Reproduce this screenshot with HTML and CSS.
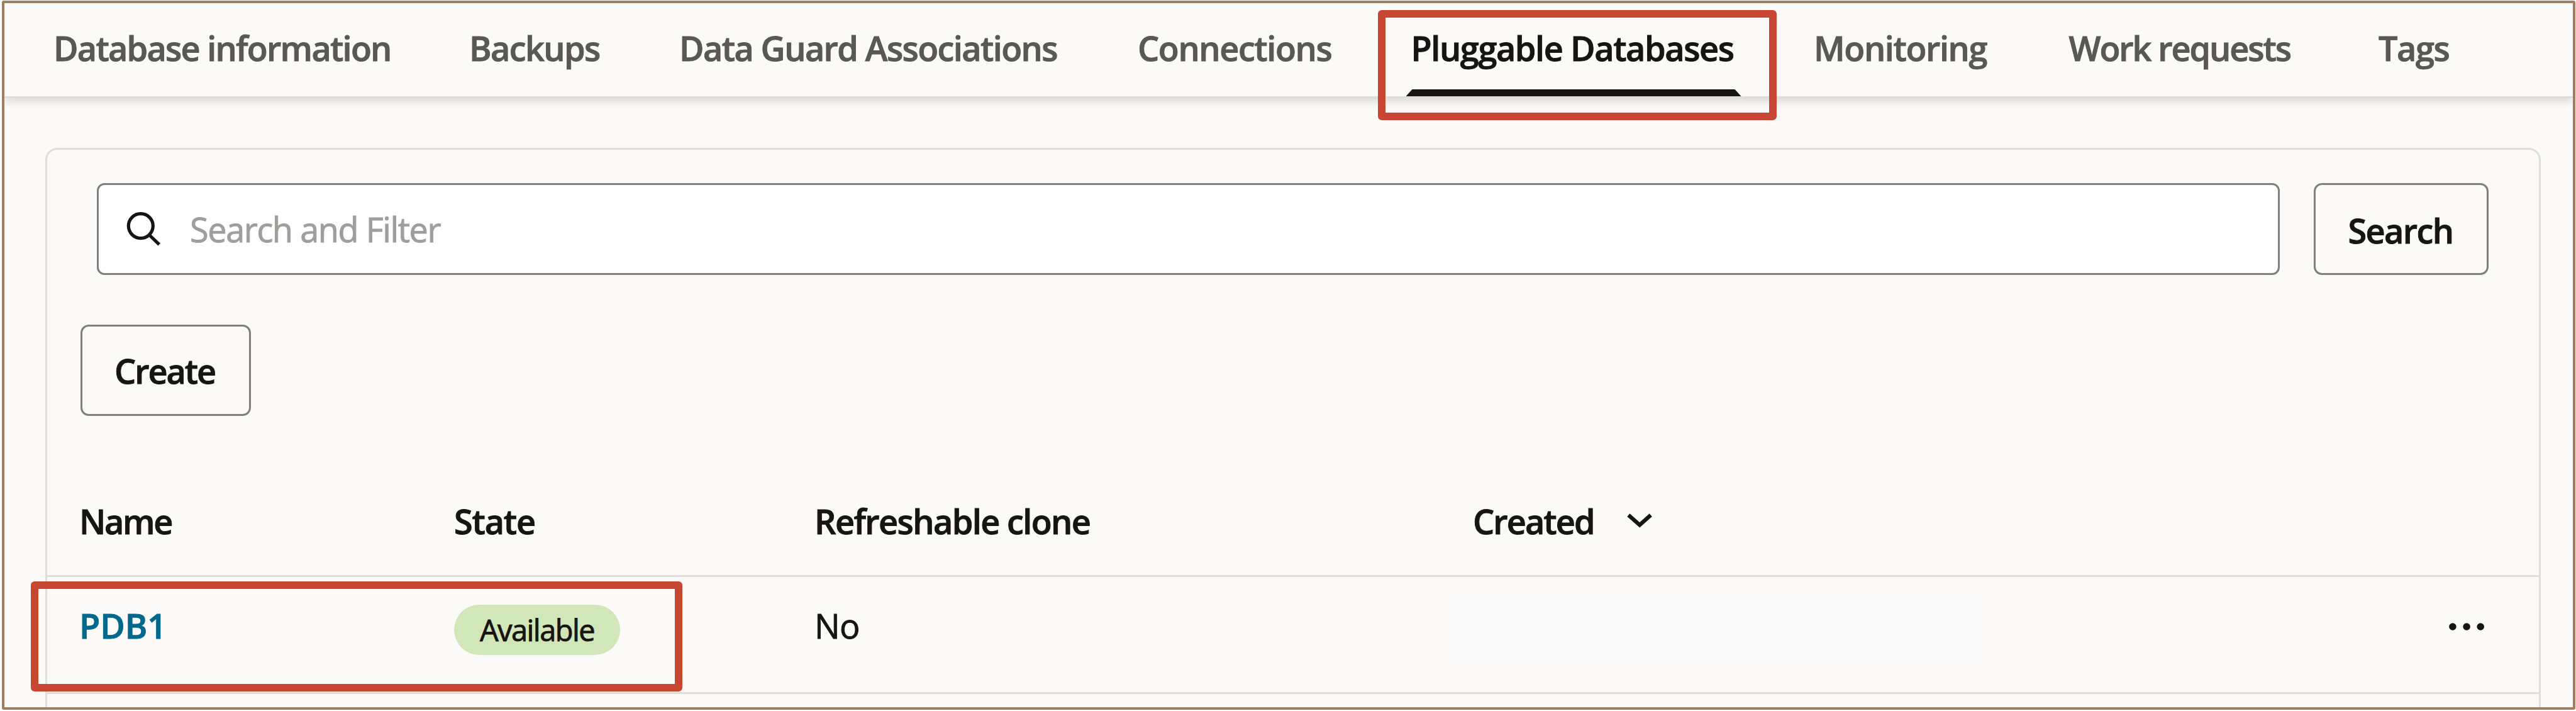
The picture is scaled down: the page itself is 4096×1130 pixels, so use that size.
FILE: index.html
```html
<!DOCTYPE html>
<html lang="en">
<head>
<meta charset="utf-8">
<title>Pluggable Databases</title>
<link rel="stylesheet" href="styles.css">
</head>
<body>
<div class="frame">
  <nav class="tabs">
    <a class="tab">Database information</a>
    <a class="tab">Backups</a>
    <a class="tab">Data Guard Associations</a>
    <a class="tab tab-loose">Connections</a>
    <a class="tab tab-loose tab-active">Pluggable Databases</a>
    <a class="tab tab-loose">Monitoring</a>
    <a class="tab tab-tight">Work requests</a>
    <a class="tab tab-loose">Tags</a>
  </nav>

  <main class="card">
    <div class="toolbar">
      <div class="search-field">
        <svg class="search-icon" viewBox="0 0 60 60" width="60" height="60">
          <circle cx="26.8" cy="25.1" r="19.5" fill="none" stroke="#161513" stroke-width="5.2"/>
          <path d="M40.5 39.5L56.2 54.7" fill="none" stroke="#161513" stroke-width="5.2"/>
        </svg>
        <span class="placeholder">Search and Filter</span>
      </div>
      <button class="button button-search" type="button">Search</button>
    </div>

    <button class="button button-create" type="button">Create</button>

    <div class="row head">
      <div class="cell-name-head">Name</div>
      <div class="cell-state-head">State</div>
      <div>Refreshable clone</div>
      <div class="sortable">
        <span class="created">Created</span>
        <svg class="chevron" viewBox="0 0 44 30" width="44" height="30">
          <path d="M4.4 5.6L22.2 21.3L39.8 5.6" fill="none" stroke="#161513" stroke-width="6.2"/>
        </svg>
      </div>
      <div></div>
    </div>

    <div class="row body-row">
      <div><a class="link">PDB1</a></div>
      <div><span class="badge">Available</span></div>
      <div class="plain">No</div>
      <div><div class="blank"></div></div>
      <div class="actions">
        <svg viewBox="0 0 56 12" width="56" height="12" fill="#161513">
          <circle cx="5.9" cy="6" r="5.8"/>
          <circle cx="28.1" cy="6" r="5.8"/>
          <circle cx="50.2" cy="6" r="5.8"/>
        </svg>
      </div>
    </div>
  </main>
</div>
<div class="callout callout-tab"></div>
<div class="callout callout-row"></div>
</body>
</html>
```
FILE: styles.css
```css
* {
  box-sizing: border-box;
}

body {
  margin: 0;
  width: 4096px;
  height: 1130px;
  padding: 1px 1px 2px 3px;
  overflow: hidden;
  position: relative;
  background: #fff;
  color: #161513;
  font-family: "Open Sans", "Noto Sans", sans-serif;
  font-size: 54px;
  font-weight: 600;
  letter-spacing: -1.6px;
  white-space: nowrap;
  -webkit-text-stroke: 0.9px currentColor;
}

.frame {
  height: 1127px;
  border: 4px solid #9e7f5f;
  border-radius: 3px;
  background: #fbfaf8;
  overflow: hidden;
}

.tabs {
  display: grid;
  grid-template-columns: 661px 334px 729px 434.5px 640.5px 405.5px 492.5px auto;
  height: 151px;
  padding-left: 78px;
  border-bottom: 3px solid #dfdedc;
  box-shadow: 0 5px 12px rgba(22, 21, 19, 0.14);
  line-height: 143px;
  color: #595856;
}

.tab:first-child {
  letter-spacing: -1.75px;
}

.tab-loose {
  letter-spacing: -1.4px;
}

.tab.tab-tight {
  letter-spacing: -2.1px;
}

.tab-active {
  position: relative;
  color: #161513;
}

.tab-active::after {
  content: "";
  position: absolute;
  left: -8px;
  top: 137px;
  width: 533px;
  height: 11px;
  background: #161513;
  clip-path: polygon(10px 0, 523px 0, 100% 100%, 0 100%);
}

.card {
  width: 3968px;
  height: 1000px;
  margin: 79px 0 0 65px;
  padding-top: 53px;
  border: 3px solid #dfdedc;
  border-radius: 19px;
}

.toolbar {
  display: flex;
  gap: 54px;
  height: 146px;
  padding-left: 79px;
}

.search-field {
  display: flex;
  align-items: center;
  width: 3471px;
  padding-left: 40px;
  border: 3px solid #807f7e;
  border-radius: 12px;
  background: #fff;
}

.search-icon {
  flex: none;
}

.placeholder {
  margin-left: 45px;
  color: #9f9e9d;
  font-weight: 400;
  letter-spacing: -1.4px;
}

.button {
  display: block;
  border: 3px solid #807f7e;
  border-radius: 13px;
  background: transparent;
  color: inherit;
  font: inherit;
  letter-spacing: -1.6px;
}

.button-search {
  width: 278px;
  padding: 3px 2px 0 0;
}

.button-create {
  width: 271px;
  height: 145px;
  margin: 79px 0 0 53px;
  padding: 1px 3px 0 0;
  letter-spacing: -2.1px;
}

.row {
  display: grid;
  grid-template-columns: 596px 573px 1047px 1fr 143px;
  padding-left: 51px;
  border-bottom: 3px solid #dfdedc;
}

.head {
  height: 175px;
  margin-top: 81px;
  line-height: 172px;
}

.cell-name-head {
  letter-spacing: -2.3px;
}

.cell-state-head {
  letter-spacing: -1.2px;
}

.sortable {
  display: flex;
  align-items: center;
}

.created {
  letter-spacing: -1.9px;
}

.chevron {
  margin-left: 50px;
}

.body-row {
  height: 186px;
  line-height: 154px;
}

.link {
  color: #00688c;
  letter-spacing: 0;
}

.badge {
  display: block;
  width: 264px;
  height: 80px;
  margin: 44px 0 0 0;
  border-radius: 40px;
  background: #d1e6b9;
  font-size: 47px;
  font-weight: 400;
  line-height: 80px;
  letter-spacing: -1.55px;
  text-align: center;
}

.plain {
  font-weight: 400;
  letter-spacing: -0.6px;
}

.blank {
  width: 841px;
  height: 112px;
  margin: 27px 0 0 -31px;
  background: #fbfafb;
}

.actions {
  display: flex;
  align-items: center;
  height: 157px;
}

.callout {
  position: absolute;
  border: 12px solid #c74634;
  border-radius: 6px;
}

.callout-tab {
  left: 2191px;
  top: 16px;
  width: 634px;
  height: 175px;
}

.callout-row {
  left: 49px;
  top: 924px;
  width: 1036px;
  height: 175px;
}
```
